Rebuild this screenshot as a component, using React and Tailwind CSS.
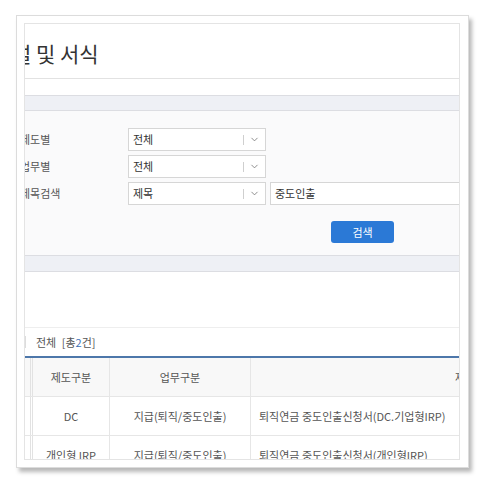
import React from 'react';
import { ChevronDown } from 'lucide-react';

const font = { fontFamily: '"Noto Sans CJK KR", "Noto Sans", sans-serif' };

// select box with separator + chevron
function SelectBox({ value }) {
  return (
    <div className="flex h-[23px] w-[138px] shrink-0 items-center border border-[#d6d6d6] bg-white pl-[4px] text-[11px] text-[#333]">
      <span className="flex-1">{value}</span>
      <span className="h-[10px] w-px bg-[#cfcfcf]" />
      <span className="flex w-[21px] justify-center text-[#777]">
        <ChevronDown size={11} strokeWidth={1.8} />
      </span>
    </div>
  );
}

const rows = [
  { kind: 'DC', task: '지급(퇴직/중도인출)', title: '퇴직연금 중도인출신청서(DC.기업형IRP)' },
  { kind: '개인형 IRP', task: '지급(퇴직/중도인출)', title: '퇴직연금 중도인출신청서(개인형IRP)' },
];

export default function App() {
  return (
    <div className="h-[484px] w-[484px] bg-white pl-[16px] pt-[15px]" style={font}>
      <div className="h-[453px] w-[453px] border border-[#dcdcdc] bg-white p-[7px] shadow-[3px_4px_4px_rgba(0,0,0,0.28)]">
        <div className="h-[437px] w-[436px] overflow-hidden border border-[#e4e4e4]">
          {/* title */}
          <div className="flex h-[55px] items-center border-b border-[#e2e2e2]">
            <h1 className="-ml-[13px] whitespace-nowrap pt-[6px] text-[21px] font-normal text-[#333]">설 및 서식</h1>
          </div>
          <div className="h-[16px]" />
          <div className="h-[16px] border-y border-[#dcdde2] bg-[#eef0f5]" />

          {/* search form */}
          <div className="h-[145px] border-b border-[#dcdde2] bg-[#fafafb] pt-[17px]">
            <div className="flex flex-col gap-[4px]">
              {[
                ['제도별', '전체'],
                ['업무별', '전체'],
                ['제목검색', '제목'],
              ].map(([label, val], i) => (
                <div key={label} className="flex items-center">
                  <span className="-ml-[5px] w-[108px] shrink-0 whitespace-nowrap text-[11px] text-[#555]">{label}</span>
                  <SelectBox value={val} />
                  {i === 2 && (
                    <div className="ml-[4px] flex h-[23px] w-[200px] shrink-0 items-center border border-[#d6d6d6] bg-white pl-[4px] text-[11px] text-[#333]">
                      중도인출
                    </div>
                  )}
                </div>
              ))}
            </div>
            <div className="mt-[16px] pl-[306px]">
              <button className="flex h-[22px] w-[63px] items-center justify-center rounded-[3px] bg-[#2b79d6] text-[11px] text-white">
                검색
              </button>
            </div>
          </div>
          <div className="h-[16px] border-b border-[#dcdde2] bg-[#eef0f5]" />
          <div className="h-[55px]" />

          {/* count row */}
          <div className="flex h-[29px] items-center border-t border-[#eeeeee]">
            <span className="h-[12px] w-px bg-[#ddd]" />
            <span className="ml-[10px] text-[11px] text-[#555]">
              전체 <span className="ml-[3px]">[총<span className="text-[#3b6fb6]">2</span>건]</span>
            </span>
          </div>

          {/* table */}
          <div className="-ml-[32px] w-[690px] border-t-2 border-[#4d77aa] text-[11px] text-[#555]">
            <div className="grid h-[39px] grid-cols-[40px_77px_141px_428px] border-b border-[#e6e6e6] bg-[#f8f8f8]">
              <div className="border-r-[3px] border-double border-[#e2e2e2]" />
              <div className="flex items-center justify-center border-r border-[#e6e6e6]">제도구분</div>
              <div className="flex items-center justify-center border-r border-[#e6e6e6]">업무구분</div>
              <div className="flex items-center justify-center">제목</div>
            </div>
            {rows.map((r) => (
              <div key={r.kind} className="grid h-[39px] grid-cols-[40px_77px_141px_428px] border-b border-[#e6e6e6]">
                <div className="border-r-[3px] border-double border-[#e2e2e2]" />
                <div className="flex items-center justify-center border-r border-[#e6e6e6]">{r.kind}</div>
                <div className="flex items-center justify-center border-r border-[#e6e6e6]">{r.task}</div>
                <div className="flex items-center pl-[8px]">{r.title}</div>
              </div>
            ))}
          </div>
        </div>
      </div>
    </div>
  );
}
